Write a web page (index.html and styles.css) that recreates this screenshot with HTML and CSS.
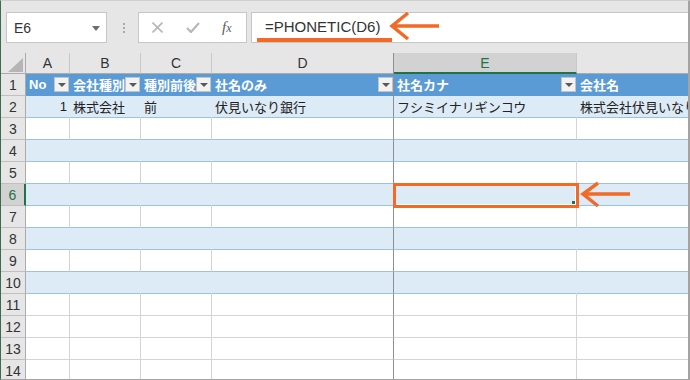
FILE: index.html
```html
<!DOCTYPE html>
<html lang="ja">
<head>
    <meta charset="UTF-8">
    <title>PHONETIC</title>
    <link rel="stylesheet" href="styles.css">
</head>
<body>
    <div class="window">
        <div class="toolbar">
            <div class="namebox">
                <span class="ref">E6</span>
                <span class="caret"></span>
            </div>
            <div class="grip"><span></span><span></span><span></span></div>
            <div class="fxbox">
                <svg class="icon" width="11" height="11" viewBox="0 0 11 11"><path d="M0.5 0.5 L10.5 10.5 M10.5 0.5 L0.5 10.5" stroke="#b7b7b7" stroke-width="1.6" fill="none"/></svg>
                <svg class="icon" width="14" height="11" viewBox="0 0 14 11"><path d="M1 6 L5 10 L13 1" stroke="#b7b7b7" stroke-width="2.2" fill="none"/></svg>
                <i class="fx">f<span>x</span></i>
            </div>
            <div class="formula">
                <span class="formula-text">=PHONETIC(D6)</span>
            </div>
        </div>

        <div class="sheet">
            <div class="row colhead">
                <div class="cell corner">
                    <svg width="15" height="14" viewBox="0 0 15 14"><path d="M15 0 L15 14 L0 14 Z" fill="#b5b5b5"/></svg>
                </div>
                <div class="cell">A</div>
                <div class="cell">B</div>
                <div class="cell">C</div>
                <div class="cell d">D</div>
                <div class="cell sel">E</div>
                <div class="cell">F</div>
            </div>

            <div class="row thead">
                <div class="cell rh">1</div>
                <div class="cell c">No<span class="filter"></span></div>
                <div class="cell c">会社種別<span class="filter"></span></div>
                <div class="cell c">種別前後<span class="filter"></span></div>
                <div class="cell c d">社名のみ<span class="filter"></span></div>
                <div class="cell c">社名カナ<span class="filter"></span></div>
                <div class="cell c">会社名</div>
            </div>

            <div class="row band">
                <div class="cell rh">2</div>
                <div class="cell c num">1</div>
                <div class="cell c">株式会社</div>
                <div class="cell c">前</div>
                <div class="cell c d">伏見いなり銀行</div>
                <div class="cell c">フシミイナリギンコウ</div>
                <div class="cell c">株式会社伏見いなり銀行</div>
            </div>

            <div class="row plain">
                <div class="cell rh">3</div>
                <div class="cell c"></div><div class="cell c"></div><div class="cell c"></div>
                <div class="cell c d"></div><div class="cell c"></div><div class="cell c"></div>
            </div>
            <div class="row band">
                <div class="cell rh">4</div>
                <div class="cell c"></div><div class="cell c"></div><div class="cell c"></div>
                <div class="cell c d"></div><div class="cell c"></div><div class="cell c"></div>
            </div>
            <div class="row plain">
                <div class="cell rh">5</div>
                <div class="cell c"></div><div class="cell c"></div><div class="cell c"></div>
                <div class="cell c d"></div><div class="cell c"></div><div class="cell c"></div>
            </div>
            <div class="row band">
                <div class="cell rh sel">6</div>
                <div class="cell c"></div><div class="cell c"></div><div class="cell c"></div>
                <div class="cell c d"></div>
                <div class="cell c active"><span class="mark"></span></div>
                <div class="cell c"></div>
            </div>
            <div class="row plain">
                <div class="cell rh">7</div>
                <div class="cell c"></div><div class="cell c"></div><div class="cell c"></div>
                <div class="cell c d"></div><div class="cell c"></div><div class="cell c"></div>
            </div>
            <div class="row band">
                <div class="cell rh">8</div>
                <div class="cell c"></div><div class="cell c"></div><div class="cell c"></div>
                <div class="cell c d"></div><div class="cell c"></div><div class="cell c"></div>
            </div>
            <div class="row plain">
                <div class="cell rh">9</div>
                <div class="cell c"></div><div class="cell c"></div><div class="cell c"></div>
                <div class="cell c d"></div><div class="cell c"></div><div class="cell c"></div>
            </div>
            <div class="row band">
                <div class="cell rh">10</div>
                <div class="cell c"></div><div class="cell c"></div><div class="cell c"></div>
                <div class="cell c d"></div><div class="cell c"></div><div class="cell c"></div>
            </div>

            <!-- outside the table -->
            <div class="row">
                <div class="cell rh">11</div>
                <div class="cell c"></div><div class="cell c"></div><div class="cell c"></div>
                <div class="cell c d"></div><div class="cell c"></div><div class="cell c"></div>
            </div>
            <div class="row">
                <div class="cell rh">12</div>
                <div class="cell c"></div><div class="cell c"></div><div class="cell c"></div>
                <div class="cell c d"></div><div class="cell c"></div><div class="cell c"></div>
            </div>
            <div class="row">
                <div class="cell rh">13</div>
                <div class="cell c"></div><div class="cell c"></div><div class="cell c"></div>
                <div class="cell c d"></div><div class="cell c"></div><div class="cell c"></div>
            </div>
            <div class="row">
                <div class="cell rh">14</div>
                <div class="cell c"></div><div class="cell c"></div><div class="cell c"></div>
                <div class="cell c d"></div><div class="cell c"></div><div class="cell c"></div>
            </div>
        </div>

        <!-- annotation arrows -->
        <svg class="arrow arrow-formula" width="56" height="32" viewBox="0 0 56 32">
            <path d="M22 3 L6 16 L22 29 M6 16 H53" stroke="#f26a25" stroke-width="3.5" fill="none"/>
        </svg>
        <svg class="arrow arrow-cell" width="56" height="32" viewBox="0 0 56 32">
            <path d="M20 5 L5 16 L20 28 M5 16 H52" stroke="#f26a25" stroke-width="3.5" fill="none"/>
        </svg>
    </div>
</body>
</html>
```

FILE: styles.css
```css
* {
    margin: 0;
    padding: 0;
    box-sizing: border-box;
}

body {
    font-family: "Liberation Sans", "Noto Sans CJK JP", sans-serif;
    background-color: #fff;
    color: #333;
}

.window {
    width: 690px;
    height: 380px;
    position: relative;
    overflow: hidden;
    background: #e6e6e6;
    border-top: 1px solid #d0d0d0;
    border-left: 1px solid #3d6b52;
    border-right: 2px solid #a3a3a3;
    border-bottom: 1px solid #a3a3a3;
}

/* formula bar */
.toolbar {
    display: flex;
    height: 52px;
    padding: 11px 0 10px 5px;
}

.namebox {
    width: 101px;
    background: #fff;
    border: 1px solid #c6c6c6;
    display: flex;
    align-items: center;
    padding: 0 6px 0 7px;
    font-size: 14px;
    color: #333;
}

.caret {
    margin-left: auto;
    border: 4px solid transparent;
    border-top: 5px solid #6d6d6d;
    margin-top: 5px;
}

.grip {
    width: 2px;
    margin: 0 13px 0 16px;
    display: flex;
    flex-direction: column;
    justify-content: center;
    gap: 2px;
}

.grip span {
    width: 2px;
    height: 2px;
    background: #a9a9a9;
}

.fxbox {
    width: 109px;
    background: #fff;
    border: 1px solid #c6c6c6;
    display: flex;
    align-items: center;
    padding-left: 13px;
    gap: 23px;
}

.fxbox .icon {
    flex-shrink: 0;
}

.fx {
    font-family: "Liberation Serif", serif;
    font-size: 15px;
    color: #5a5a5a;
    margin-left: -1px;
}

.fx span {
    font-size: 12px;
}

.formula {
    flex: 1;
    margin-left: 4px;
    background: #fff;
    border: 1px solid #c6c6c6;
    border-right: none;
    display: flex;
    align-items: flex-end;
    padding-left: 5px;
}

.formula-text {
    display: inline-block;
    padding: 0 12px 0 8px;
    line-height: 22px;
    font-size: 15px;
    color: #333;
    border-bottom: 4px solid #f26a25;
}

/* grid */
.row {
    display: grid;
    grid-template-columns: 25px 44px 71px 71px 182px 183px 230px;
    height: 22px;
}

.cell {
    display: flex;
    align-items: center;
    padding: 0 3px;
    font-size: 13px;
    white-space: nowrap;
    overflow: hidden;
    background: #fff;
    border-right: 1px solid #d4d4d4;
    border-bottom: 1px solid #d4d4d4;
    color: #222;
}

.colhead {
    height: 21px;
}

.colhead .cell {
    background: #e6e6e6;
    justify-content: center;
    font-size: 14px;
    color: #333;
    border-right-color: #c8c8c8;
    border-bottom-color: #ababab;
}

.colhead .corner {
    align-items: flex-end;
    justify-content: flex-end;
    padding: 0 2px 1px 0;
    border-right-color: #ababab;
}

.colhead .sel {
    background: #d2d2d2;
    color: #217346;
    border-bottom: 2px solid #217346;
}

.rh {
    background: #e6e6e6;
    justify-content: center;
    padding: 0;
    font-size: 14px;
    color: #333;
    border-right-color: #ababab;
    border-bottom-color: #c0c0c0;
}

.rh.sel {
    background: #d2d2d2;
    color: #217346;
    border-right: 2px solid #217346;
}

.thead .c {
    background: #5b9bd5;
    color: #fff;
    font-weight: bold;
    padding-right: 0;
    border-right-color: #5b9bd5;
    border-bottom-color: #5b9bd5;
}

.filter {
    width: 15px;
    height: 15px;
    margin-left: auto;
    flex-shrink: 0;
    background: #f2f2f2;
    border: 1px solid #c4c4c4;
    display: flex;
    align-items: center;
    justify-content: center;
}

.filter::after {
    content: "";
    border: 4px solid transparent;
    border-top: 4px solid #595959;
    margin-top: 4px;
}

.band .c {
    background: #ddebf7;
    border-right-color: #ddebf7;
    border-bottom-color: #9bc2e6;
}

.plain .c {
    border-bottom-color: #9bc2e6;
}

.row .c.d,
.colhead .cell.d {
    border-right-color: #8f8f8f;
}

.num {
    justify-content: flex-end;
    padding-right: 2px;
}

/* selected cell with the callout frame */
.cell.active {
    position: relative;
    overflow: visible;
}

.mark {
    position: absolute;
    left: -1px;
    top: -1px;
    right: -3px;
    bottom: -3px;
    border: 3px solid #f26a25;
    box-shadow: inset -1px -1px 0 #fff;
}

.mark::after {
    content: "";
    position: absolute;
    right: 1px;
    bottom: 1px;
    width: 3px;
    height: 3px;
    background: #217346;
}

.arrow {
    position: absolute;
}

.arrow-formula {
    left: 385px;
    top: 9px;
}

.arrow-cell {
    left: 577px;
    top: 177px;
}
```
